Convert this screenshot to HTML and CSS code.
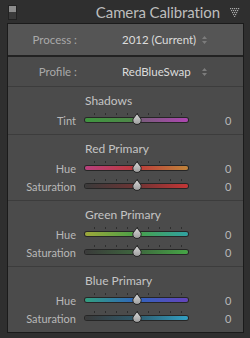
FILE: index.html
```html
<!DOCTYPE html>
<html>
<head>
<meta charset="utf-8">
<link rel="stylesheet" href="styles.css">
</head>
<body>
<div class="app">
  <div class="header">
    <div class="toggle"><span class="toggle-top"></span><span class="toggle-bottom"></span></div>
    <div class="header-title">Camera Calibration</div>
    <svg class="collapse" width="10" height="9" viewBox="0 0 10 9">
      <g fill="#a8a8a8">
        <rect x="0" y="0" width="1.2" height="1.2"/><rect x="2" y="0" width="1.2" height="1.2"/><rect x="4" y="0" width="1.2" height="1.2"/><rect x="6" y="0" width="1.2" height="1.2"/><rect x="8" y="0" width="1.2" height="1.2"/>
        <rect x="1" y="2" width="1.2" height="1.2"/><rect x="3" y="2" width="1.2" height="1.2"/><rect x="5" y="2" width="1.2" height="1.2"/><rect x="7" y="2" width="1.2" height="1.2"/>
        <rect x="2" y="4" width="1.2" height="1.2"/><rect x="4" y="4" width="1.2" height="1.2"/><rect x="6" y="4" width="1.2" height="1.2"/>
        <rect x="3" y="6" width="1.2" height="1.2"/><rect x="5" y="6" width="1.2" height="1.2"/>
        <rect x="4" y="8" width="1.2" height="1"/>
      </g>
    </svg>
  </div>
  <div class="panel">
    <div class="select-row select-row--process">
      <div class="select-label">Process :</div>
      <div class="select-value">2012 (Current)</div>
      <svg class="stepper" width="5" height="8" viewBox="0 0 5 8"><path d="M2.5 0 L5 3 L0 3 Z M0 5 L5 5 L2.5 8 Z" fill="#7c7c7c"/></svg>
    </div>
    <div class="select-row select-row--profile">
      <div class="select-label">Profile :</div>
      <div class="select-value">RedBlueSwap</div>
      <svg class="stepper" width="5" height="8" viewBox="0 0 5 8"><path d="M2.5 0 L5 3 L0 3 Z M0 5 L5 5 L2.5 8 Z" fill="#7c7c7c"/></svg>
    </div>

    <div class="section">
      <div class="section-title">Shadows</div>
      <div class="slider">
        <div class="slider-label">Tint</div>
        <div class="track track--tint"><svg class="thumb" width="10" height="12" viewBox="0 0 10 12"><defs><linearGradient id="tg" x1="0" y1="0" x2="0" y2="1"><stop offset="0" stop-color="#d8d8d8"/><stop offset="1" stop-color="#9c9c9c"/></linearGradient></defs><path d="M5 0.7 L9 6 A4.2 4.2 0 1 1 1 6 Z" fill="url(#tg)" stroke="#1c1c1c" stroke-width="0.9"/></svg></div>
        <div class="slider-value">0</div>
      </div>
    </div>

    <div class="section">
      <div class="section-title">Red Primary</div>
      <div class="slider">
        <div class="slider-label">Hue</div>
        <div class="track track--red-hue"><svg class="thumb" width="10" height="12" viewBox="0 0 10 12"><path d="M5 0.7 L9 6 A4.2 4.2 0 1 1 1 6 Z" fill="url(#tg)" stroke="#1c1c1c" stroke-width="0.9"/></svg></div>
        <div class="slider-value">0</div>
      </div>
      <div class="slider">
        <div class="slider-label">Saturation</div>
        <div class="track track--red-sat"><svg class="thumb" width="10" height="12" viewBox="0 0 10 12"><path d="M5 0.7 L9 6 A4.2 4.2 0 1 1 1 6 Z" fill="url(#tg)" stroke="#1c1c1c" stroke-width="0.9"/></svg></div>
        <div class="slider-value">0</div>
      </div>
    </div>

    <div class="section">
      <div class="section-title">Green Primary</div>
      <div class="slider">
        <div class="slider-label">Hue</div>
        <div class="track track--green-hue"><svg class="thumb" width="10" height="12" viewBox="0 0 10 12"><path d="M5 0.7 L9 6 A4.2 4.2 0 1 1 1 6 Z" fill="url(#tg)" stroke="#1c1c1c" stroke-width="0.9"/></svg></div>
        <div class="slider-value">0</div>
      </div>
      <div class="slider">
        <div class="slider-label">Saturation</div>
        <div class="track track--green-sat"><svg class="thumb" width="10" height="12" viewBox="0 0 10 12"><path d="M5 0.7 L9 6 A4.2 4.2 0 1 1 1 6 Z" fill="url(#tg)" stroke="#1c1c1c" stroke-width="0.9"/></svg></div>
        <div class="slider-value">0</div>
      </div>
    </div>

    <div class="section section--last">
      <div class="section-title">Blue Primary</div>
      <div class="slider">
        <div class="slider-label">Hue</div>
        <div class="track track--blue-hue"><svg class="thumb" width="10" height="12" viewBox="0 0 10 12"><path d="M5 0.7 L9 6 A4.2 4.2 0 1 1 1 6 Z" fill="url(#tg)" stroke="#1c1c1c" stroke-width="0.9"/></svg></div>
        <div class="slider-value">0</div>
      </div>
      <div class="slider">
        <div class="slider-label">Saturation</div>
        <div class="track track--blue-sat"><svg class="thumb" width="10" height="12" viewBox="0 0 10 12"><path d="M5 0.7 L9 6 A4.2 4.2 0 1 1 1 6 Z" fill="url(#tg)" stroke="#1c1c1c" stroke-width="0.9"/></svg></div>
        <div class="slider-value">0</div>
      </div>
    </div>
  </div>
</div>
</body>
</html>
```
FILE: styles.css
```css
* { box-sizing: border-box; }
html, body {
  margin: 0;
  padding: 0;
  background: #2f2f2f;
}
.app {
  width: 250px;
  height: 338px;
  background: #2f2f2f;
  font-family: Lato, "Open Sans", sans-serif;
  color: #bcbcbc;
  overflow: hidden;
}
.header {
  height: 23px;
  display: flex;
  align-items: center;
  padding: 0 10px 0 8px;
}
.toggle {
  width: 9px;
  height: 15px;
  display: flex;
  flex-direction: column;
  border: 1px solid #222;
  margin-top: 1px;
}
.toggle-top { flex: 1; background: #8c8c8c; }
.toggle-bottom { flex: 1; background: #3a3a3a; }
.header-title {
  margin-left: auto;
  font-size: 15px;
  letter-spacing: -0.1px;
  color: #bdbdbd;
  line-height: 20px;
  margin-right: 10px;
}
.collapse { display: block; margin-top: 1px; }

.panel {
  margin: 0 6px 0 7px;
  border: 1px solid #1b1b1b;
  background: #4b4b4b;
}
.select-row {
  display: flex;
  align-items: center;
  font-size: 11.5px;
}
.select-row--process {
  height: 33px;
  background: #555;
  border-bottom: 2px solid #222;
}
.select-row--profile {
  height: 30px;
  border-bottom: 1px solid #3c3c3c;
}
.select-label {
  width: 69px;
  text-align: right;
  color: #a9a9a9;
}
.select-value {
  margin-left: 45px;
  width: 80px;
  flex: none;
  color: #dcdcdc;
}
.stepper { display: block; }

.section {
  padding: 5px 0 5px;
  border-bottom: 1px solid #3c3c3c;
}
.section--last { border-bottom: 0; }
.section-title {
  padding-left: 77px;
  font-size: 12px;
  line-height: 18px;
  color: #c4c4c4;
  margin-bottom: 1px;
}
.slider {
  display: grid;
  grid-template-columns: 68px 103px auto;
  column-gap: 9px;
  align-items: center;
  height: 18px;
  font-size: 11px;
}
.slider-label {
  text-align: right;
  color: #b8b8b8;
}
.slider-value {
  padding-left: 28px;
  color: #b8b8b8;
}
.track {
  position: relative;
  height: 4px;
  border-radius: 2px;
  box-shadow: 0 0 0 1px #262626;
}
.track::before {
  content: "";
  position: absolute;
  left: 9px;
  top: -5px;
  width: 89px;
  height: 2px;
  background: repeating-linear-gradient(to right, #2e2e2e 0 1px, transparent 1px 10.875px);
}
.thumb {
  position: absolute;
  left: calc(50% - 5px);
  top: -5px;
  display: block;
}
.track--tint { background: linear-gradient(to right, #3f963f, #4f8649 48%, #775c79 52%, #ad46b1); }
.track--red-hue { background: linear-gradient(to right, #b8407e, #bc3a3a 50%, #c0843a); }
.track--red-sat { background: linear-gradient(to right, #3a3a3a, #6e3434 50%, #c43636); }
.track--green-hue { background: linear-gradient(to right, #9ea83a, #48a048 50%, #30a2a2); }
.track--green-sat { background: linear-gradient(to right, #3a3a3a, #3e663e 50%, #46a646); }
.track--blue-hue { background: linear-gradient(to right, #32a080, #3064bc 50%, #6444bc); }
.track--blue-sat { background: linear-gradient(to right, #3a3a3a, #2e5a6c 50%, #32a0c4); }
```
